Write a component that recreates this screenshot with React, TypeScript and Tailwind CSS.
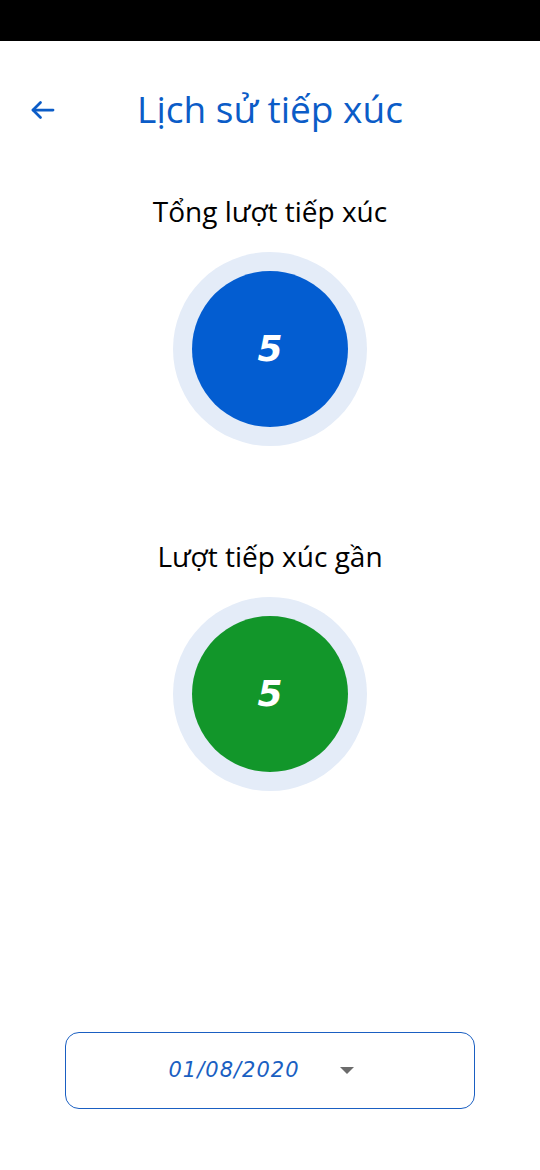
import React from "react";

function Ring({ color, value }: { color: string; value: string }) {
  return (
    <div className="flex h-[194px] w-[194px] items-center justify-center rounded-full bg-[#e4ecf8]">
      <div
        className="flex h-[156px] w-[156px] items-center justify-center rounded-full"
        style={{ backgroundColor: color }}
      >
        <span className="text-[36px] font-bold italic leading-none text-white [font-family:'DejaVu_Sans',sans-serif]">
          {value}
        </span>
      </div>
    </div>
  );
}

export default function App() {
  return (
    <div className="flex h-[1170px] w-[540px] flex-col bg-white [font-family:'Open_Sans','Noto_Sans',sans-serif]">
      <div className="h-[41px] w-full bg-black" />
      <div className="relative flex h-[136px] items-center justify-center pb-[2px]">
        <svg
          className="absolute left-[28px] top-[54px]"
          width="30"
          height="30"
          viewBox="0 0 24 24"
          fill="none"
          stroke="#0b5cc7"
          strokeWidth="2.2"
          strokeLinecap="round"
          strokeLinejoin="round"
        >
          <path d="M20 12H4" />
          <path d="M10 6l-6 6 6 6" />
        </svg>
        <h1 className="text-[37px] font-medium leading-none text-[#0b5cc7]">Lịch sử tiếp xúc</h1>
      </div>
      <div className="flex flex-col items-center">
        <div className="mt-[20px] text-[28px] leading-none text-black">Tổng lượt tiếp xúc</div>
        <div className="mt-[27px]">
          <Ring color="#035dd1" value="5" />
        </div>
        <div className="mt-[96px] text-[28px] leading-none text-black">Lượt tiếp xúc gần</div>
        <div className="mt-[27px]">
          <Ring color="#12962a" value="5" />
        </div>
      </div>
      <div className="mt-[241px] flex justify-center">
        <div className="flex h-[77px] w-[410px] items-center justify-center rounded-[14px] border-[1.5px] border-[#1a5fc2]">
          <span className="ml-[-18px] text-[21px] italic tracking-[1px] text-[#1a5fc2] [font-family:'DejaVu_Sans',sans-serif]">
            01/08/2020
          </span>
          <svg className="ml-[40px]" width="14" height="8" viewBox="0 0 14 8">
            <path d="M0 0h14L7 7z" fill="#6b6b6b" />
          </svg>
        </div>
      </div>
    </div>
  );
}
